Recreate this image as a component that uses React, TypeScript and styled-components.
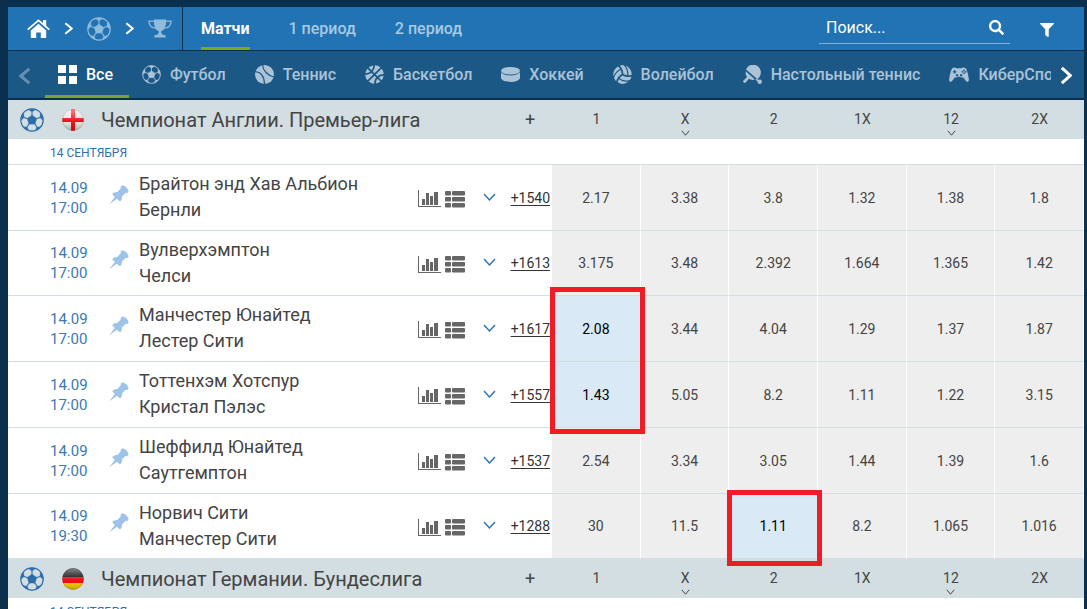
import React from 'react';
import styled, { createGlobalStyle } from 'styled-components';
import { FaSearch, FaFilter, FaBasketballBall, FaVolleyballBall } from 'react-icons/fa';

const GlobalStyle = createGlobalStyle`
  * { box-sizing: border-box; }
  body {
    margin: 0;
    background: #0b304e;
    font-family: Roboto, "Liberation Sans", sans-serif;
    color: #444;
    overflow: hidden;
  }
  button, input { font: inherit; }
  svg { display: block; flex: none; }
`;

const Page = styled.div`
  padding: 7px 3px 0 8px;
  height: 100vh;
  overflow: hidden;
`;

const TopBar = styled.header`
  display: flex;
  height: 43px;
  background: #2273b3;
  color: #fff;
`;

const Crumbs = styled.nav`
  display: flex;
  align-items: center;
  gap: 14px;
  width: 175px;
  padding-left: 19px;
  border-right: 1px solid #0b304e;
`;

const CrumbLink = styled.a<{ $dim?: boolean }>`
  display: block;
  color: ${p => (p.$dim ? '#91bbdb' : '#fff')};
`;

const Periods = styled.div`
  display: flex;
  gap: 39px;
  margin-left: 18px;
`;

const PeriodButton = styled.button<{ $active?: boolean }>`
  padding: 3px 0 0;
  border: 0;
  border-bottom: 3px solid ${p => (p.$active ? '#78ab1c' : 'transparent')};
  background: none;
  font-size: 16px;
  font-weight: ${p => (p.$active ? 700 : 500)};
  color: ${p => (p.$active ? '#fff' : '#a7c9e4')};
`;

const Search = styled.label`
  display: flex;
  align-items: center;
  width: 191px;
  height: 37px;
  margin-left: auto;
  padding: 5px 6px 0 7px;
  border-bottom: 1px solid #7fb0d6;
`;

const SearchInput = styled.input`
  flex: 1;
  min-width: 0;
  padding: 0;
  border: 0;
  outline: 0;
  background: none;
  font-size: 16px;
  color: #fff;
  &::placeholder { color: #fff; opacity: 1; }
`;

const IconButton = styled.button<{ $dim?: boolean }>`
  display: flex;
  align-items: center;
  justify-content: center;
  flex: none;
  padding: 0;
  border: 0;
  background: none;
  color: ${p => (p.$dim ? '#6790b0' : '#fff')};
`;

const FilterButton = styled(IconButton)`
  width: 74px;
  padding-top: 2px;
`;

const SportsBar = styled.nav`
  display: flex;
  height: 47px;
  margin: 1px 0 2px;
  background: #1c5885;
`;

const ScrollButton = styled(IconButton)`
  width: ${p => (p.$dim ? 37 : 33)}px;
  padding: 2px 3px 0 0;
`;

const SportsList = styled.div`
  display: flex;
  flex: 1;
  min-width: 0;
  overflow: hidden;
`;

const SportTab = styled.button<{ $active?: boolean }>`
  display: flex;
  align-items: center;
  gap: 9px;
  flex: none;
  padding: 3px 16px 0 13px;
  border: 0;
  border-bottom: 3px solid ${p => (p.$active ? '#78a530' : 'transparent')};
  background: none;
  font-size: 16px;
  font-weight: 500;
  white-space: nowrap;
  color: ${p => (p.$active ? '#fff' : '#abc3d7')};
`;

const LeagueTable = styled.table`
  width: 100%;
  table-layout: fixed;
  border-collapse: separate;
  border-spacing: 0;
  background: #fff;
  th, td { padding: 0; }
`;

const Column = styled.col<{ $w?: number }>`
  width: ${p => (p.$w ? `${p.$w}px` : 'auto')};
`;

const HeadRow = styled.tr`
  height: 39px;
  background: #d3dee2;
`;

const HeadCell = styled.th`
  font-size: 14px;
  font-weight: 400;
  text-align: center;
`;

const PlusCell = styled(HeadCell)`
  && { padding-right: 2px; }
  font-size: 18px;
`;

const LeagueName = styled.div`
  display: flex;
  align-items: center;
  padding-left: 12px;
  font-size: 20px;
  text-align: left;
  color: #444;
  white-space: nowrap;
`;

const LeagueSport = styled.span`
  color: #2b6dab;
`;

const FlagSlot = styled.span`
  margin: 0 17px 0 18px;
`;

const MarketButton = styled.button`
  display: flex;
  flex-direction: column;
  align-items: center;
  gap: 2px;
  width: 100%;
  height: 39px;
  padding: 11px 0 0;
  border: 0;
  background: none;
  line-height: 17px;
  color: #444;
`;

const DateCell = styled.td`
  && { height: 26px; padding: 3px 0 0 42px; }
  border-bottom: 1px solid #d3dee2;
  font-size: 12px;
  color: #2e70ab;
`;

const MatchRow = styled.tr`
  height: 66px;
  &:nth-child(4n + 3) { height: 65px; }
  td { border-bottom: 1px solid #d3dee2; }
`;

const TimeCell = styled.td`
  && { padding-left: 42px; }
  font-size: 15px;
  line-height: 20px;
  color: #3a79b1;
`;

const PinCell = styled.td`
  && { padding: 0 0 6px 9px; }
`;

const PinButton = styled(IconButton)`
  color: #9ec3e8;
`;

const TeamsCell = styled.td`
  && { padding-bottom: 1px; }
  font-size: 18px;
  line-height: 26px;
  white-space: nowrap;
`;

const Tools = styled.div`
  display: flex;
  align-items: center;
  gap: 4px;
  padding-top: 3px;
`;

const ToolButton = styled(IconButton)`
  color: #666;
`;

const ExpandButton = styled(IconButton)`
  margin: 0 0 5px 14px;
  color: #2e76b5;
`;

const CountCell = styled.td`
  && { padding-right: 2px; }
  text-align: right;
  font-size: 14px;
`;

const CountLink = styled.a`
  color: #333;
  text-underline-offset: 2px;
`;

const OddCell = styled.td<{ $hot?: boolean }>`
  position: relative;
  border-right: 1px solid #fff;
  background: ${p => (p.$hot ? '#d9e9f5' : '#eee')};
`;

const OddButton = styled.button<{ $hot?: boolean }>`
  width: 100%;
  height: 64px;
  padding: 0;
  border: 0;
  background: none;
  font-size: 14px;
  color: ${p => (p.$hot ? '#000' : '#444')};
`;

const Marker = styled.span<{ $rows: number }>`
  position: absolute;
  z-index: 2;
  top: ${p => (p.$rows > 1 ? -9 : -4)}px;
  left: -2px;
  right: -5px;
  height: ${p => (p.$rows > 1 ? 147 : 76)}px;
  border: 5px solid #ee1c25;
  pointer-events: none;
`;

const Football = ({ size }: { size: number }) => (
  <svg width={size} height={size} viewBox="0 0 24 24" fill="none" stroke="currentColor">
    <circle cx="12" cy="12" r="11.2" strokeWidth="1.2" />
    <path d="M12 7.2l4.700 3.400-1.800 5.400H9.100l-1.800-5.400z" fill="currentColor" strokeWidth=".6" />
    <path d="M12 8V3.8M16 10.8l4-1.4M14.6 15.600l2.600 3.600M9.400 15.600l-2.600 3.600M8 10.800L4 9.400" strokeWidth="1.1" />
    <path d="M8.200 1.600L12 4l3.800-2.400q-3.800-1.400-7.600 0zM20.400 5.200l-.6 4.300 3.200 2.800q.2-4-2.600-7.100zM3.600 5.200l.6 4.300L1 12.300q-.2-4 2.600-7.100zM16.700 19.300l4.100-.8q-2 3-5.600 4.200zM7.300 19.300l-4.100-.8q2 3 5.600 4.200z" fill="currentColor" strokeWidth=".3" />
  </svg>
);

const Home = () => (
  <svg width="23" height="20" viewBox="0 0 23 20" fill="currentColor">
    <path d="M11.500 4.800l7.700 6.800V18.300q0 .7-.7.700h-4.700v-5.500H9.200V19H4.500q-.7 0-.7-.7v-6.700z" />
    <path d="M.7 10.600L11.500 1.400l10.800 9.200" fill="none" stroke="currentColor" strokeWidth="1.800" />
    <path d="M16 1h3.200v7.500L16 5.800z" />
  </svg>
);

const Trophy = () => (
  <svg width="24" height="19" viewBox="0 0 24 19" fill="currentColor">
    <path d="M6 .5h12v3.300c0 4.300-2 7.200-4.300 8.300-.6.400-.5 1.600-.1 2.300.5.900 1.300 1.500 3.400 1.700.5 0 .6.300.6.600V18.500H6.400v-1.800c0-.3.1-.6.6-.6 2.100-.2 2.900-.8 3.400-1.700.4-.7.500-1.900-.1-2.300C8 11 6 8.100 6 3.800z" />
    <path d="M6 2.200H.9c.1 4.200 2.800 6.800 7.500 7.100M18 2.200h5.100c-.1 4.200-2.800 6.800-7.500 7.100" fill="none" stroke="currentColor" strokeWidth="1.300" />
  </svg>
);

const Chevron = ({ w, h, stroke, dir }: { w: number; h: number; stroke: number; dir: 'left' | 'right' | 'down' }) => {
  const s = stroke / 2 + 0.3;
  const d = {
    right: `M${s} ${s}L${w - s} ${h / 2}L${s} ${h - s}`,
    left: `M${w - s} ${s}L${s} ${h / 2}L${w - s} ${h - s}`,
    down: `M${s} ${s}L${w / 2} ${h - s}L${w - s} ${s}`,
  }[dir];
  return (
    <svg width={w} height={h} viewBox={`0 0 ${w} ${h}`} fill="none" stroke="currentColor" strokeWidth={stroke}>
      <path d={d} />
    </svg>
  );
};

const AllSports = () => (
  <svg width="19" height="19" viewBox="0 0 19 19" fill="currentColor">
    <path d="M0 0h8v8H0zM11 0h8v8h-8zM0 11h8v8H0zM11 11h8v8h-8z" />
  </svg>
);

const Tennis = () => (
  <svg width="19" height="19" viewBox="0 0 19 19" fill="none" stroke="#1c5885" strokeWidth="1.200">
    <circle cx="9.500" cy="9.500" r="9.500" fill="currentColor" stroke="none" />
    <path d="M7.500 0c.5 5.500 5 10.500 11.500 12M0 6.500c6 .5 9.300 5.500 9.500 12.500" />
  </svg>
);

const Puck = () => (
  <svg width="19" height="15" viewBox="0 0 19 15" fill="currentColor">
    <ellipse cx="9.500" cy="3.800" rx="9.500" ry="3.800" />
    <path d="M0 5.300c1.500 2 5 3.200 9.500 3.200S17.500 7.300 19 5.300v6C18 13.700 14 15 9.500 15S1 13.700 0 11.300z" />
  </svg>
);

const TableTennis = () => (
  <svg width="19" height="19" viewBox="0 0 19 19" fill="currentColor">
    <path d="M3.800 3A7.300 7.300 0 0 1 16.500 11.800q-.8 1.500-2 2.400L3 4.400z" />
    <path d="M2.800 6.200L12 14.600q-3.500 1-6-.8l-3.300 3.800q-1 .8-2-.1t-.2-2l3.500-3.400q-2-2.600-1.200-5.900z" />
    <path d="M13 14.200l2.500 2" stroke="currentColor" strokeWidth="1.500" />
    <circle cx="16.700" cy="16.700" r="2.200" />
  </svg>
);

const Gamepad = () => (
  <svg width="20" height="15" viewBox="0 0 20 15" fill="currentColor">
    <path fillRule="evenodd" d="M4.200.8Q6 .2 7.300 1.200h5.400Q14 .2 15.800.8q1.500.5 2.200 3 1.500 4.600 1.900 8.700c.1 2.600-2 3-3.200 1.300l-2.600-3.600q-1.700.8-3-.5H8.900q-1.300 1.300-3 .5l-2.600 3.600C2.100 15.500 0 15.100.1 12.500Q.5 8.400 2 3.800 2.700 1.300 4.200.8zM5 3v1.200H3.800v1.200H5v1.200h1.200V5.400h1.200V4.200H6.200V3zM8 7a1.200 1.200 0 1 0 .1 0zm4 0a1.200 1.200 0 1 0 .1 0zM15 2.500a.8.8 0 1 0 .1 0zm0 3a.8.8 0 1 0 .1 0zm-1.600-1.500a.8.8 0 1 0 .1 0zm3.200 0a.8.8 0 1 0 .1 0z" />
  </svg>
);

const Pin = () => (
  <svg width="20" height="20" viewBox="0 0 20 20" fill="currentColor">
    <path d="M0 19.600L5.800 12 3.400 9.600Q3.800 6.900 8.300 7L11.800 3.300Q11.300 1.500 12.500.7 15 0 17.300 2.200 20 5 19.400 7 18.600 8.500 16.700 7.800L12.900 11.500Q13.300 15.500 10.700 16.300L7.900 13.700z" />
  </svg>
);

const Stats = () => (
  <svg width="23" height="18" viewBox="0 0 23 18" fill="currentColor">
    <path d="M0 0h1v16h22v1H0zM4 9h3v6H4zM8 3h3v12H8zM12 6h3v9h-3zM16 2h4v13h-4z" />
  </svg>
);

const ListIcon = () => (
  <svg width="20" height="17" viewBox="0 0 20 17" fill="currentColor">
    {[0, 6, 12].map(y => (
      <g key={y}>
        <rect x="0" y={y} width="6" height="4.500" rx="1" />
        <rect x="7" y={y} width="13" height="4.500" rx="1" />
      </g>
    ))}
  </svg>
);

const Flag = ({ country }: { country: 'en' | 'de' }) => (
  <svg width="22" height="22" viewBox="0 0 22 22">
    <defs>
      <clipPath id={`disc-${country}`}><circle cx="11" cy="11" r="10.700" /></clipPath>
      <linearGradient id={`gloss-${country}`} x1="0" y1="0" x2="0" y2="1">
        <stop offset="0" stopColor="#fff" stopOpacity=".5" />
        <stop offset=".45" stopColor="#fff" stopOpacity=".1" />
        <stop offset=".6" stopColor="#000" stopOpacity="0" />
        <stop offset="1" stopColor="#000" stopOpacity=".25" />
      </linearGradient>
    </defs>
    <g clipPath={`url(#disc-${country})`}>
      {country === 'en' ? (
        <>
          <path d="M0 0h22v22H0z" fill="#e6e6e6" />
          <path d="M9 0h4v9h9v4h-9v9H9v-9H0V9h9z" fill="#f8101c" />
        </>
      ) : (
        <>
          <path d="M0 0h22v9H0z" fill="#111" />
          <path d="M0 9h22v6H0z" fill="#f01010" />
          <path d="M0 15h22v7H0z" fill="#ffd400" />
        </>
      )}
      <path d="M0 0h22v22H0z" fill={`url(#gloss-${country})`} />
    </g>
    <circle cx="11" cy="11" r="10.500" fill="none" stroke="#000" strokeOpacity=".2" strokeWidth=".7" />
  </svg>
);

const sports: [string, React.ReactNode][] = [
  ['Все', <AllSports />],
  ['Футбол', <Football size={19} />],
  ['Теннис', <Tennis />],
  ['Баскетбол', <FaBasketballBall size={19} />],
  ['Хоккей', <Puck />],
  ['Волейбол', <FaVolleyballBall size={19} />],
  ['Настольный теннис', <TableTennis />],
  ['КиберСпорт', <Gamepad />],
];

interface Match {
  time: string;
  home: string;
  away: string;
  count: string;
  odds: string[];
  hot?: number;
  marker?: number;
}

const englishMatches: Match[] = [
  { time: '17:00', home: 'Брайтон энд Хав Альбион', away: 'Бернли', count: '+1540', odds: ['2.17', '3.38', '3.8', '1.32', '1.38', '1.8'] },
  { time: '17:00', home: 'Вулверхэмптон', away: 'Челси', count: '+1613', odds: ['3.175', '3.48', '2.392', '1.664', '1.365', '1.42'] },
  { time: '17:00', home: 'Манчестер Юнайтед', away: 'Лестер Сити', count: '+1617', odds: ['2.08', '3.44', '4.04', '1.29', '1.37', '1.87'], hot: 0, marker: 2 },
  { time: '17:00', home: 'Тоттенхэм Хотспур', away: 'Кристал Пэлэс', count: '+1557', odds: ['1.43', '5.05', '8.2', '1.11', '1.22', '3.15'], hot: 0 },
  { time: '17:00', home: 'Шеффилд Юнайтед', away: 'Саутгемптон', count: '+1537', odds: ['2.54', '3.34', '3.05', '1.44', '1.39', '1.6'] },
  { time: '19:30', home: 'Норвич Сити', away: 'Манчестер Сити', count: '+1288', odds: ['30', '11.5', '1.11', '8.2', '1.065', '1.016'], hot: 2, marker: 1 },
];

const markets = ['1', 'X', '2', '1X', '12', '2X'];
const leftColumns = [92, 39, 279, 92, 42];

const League = ({ name, country, matches }: { name: string; country: 'en' | 'de'; matches: Match[] }) => (
  <LeagueTable>
    <colgroup>
      {leftColumns.map((w, i) => <Column key={i} $w={w} />)}
      {markets.map(m => <Column key={m} />)}
    </colgroup>
    <thead>
      <HeadRow>
        <HeadCell colSpan={4}>
          <LeagueName>
            <LeagueSport><Football size={24} /></LeagueSport>
            <FlagSlot><Flag country={country} /></FlagSlot>
            {name}
          </LeagueName>
        </HeadCell>
        <PlusCell>+</PlusCell>
        {markets.map(m => (
          <HeadCell key={m}>
            <MarketButton>
              {m}
              {(m === 'X' || m === '12') && <Chevron w={9} h={6} stroke={1} dir="down" />}
            </MarketButton>
          </HeadCell>
        ))}
      </HeadRow>
    </thead>
    <tbody>
      <tr><DateCell colSpan={11}>14 СЕНТЯБРЯ</DateCell></tr>
      {matches.map(match => (
        <MatchRow key={match.home}>
          <TimeCell>14.09<br />{match.time}</TimeCell>
          <PinCell><PinButton aria-label="Закрепить"><Pin /></PinButton></PinCell>
          <TeamsCell>{match.home}<br />{match.away}</TeamsCell>
          <td>
            <Tools>
              <ToolButton aria-label="Статистика"><Stats /></ToolButton>
              <ToolButton aria-label="Список"><ListIcon /></ToolButton>
              <ExpandButton aria-label="Развернуть"><Chevron w={13} h={8} stroke={1.5} dir="down" /></ExpandButton>
            </Tools>
          </td>
          <CountCell><CountLink href="#">{match.count}</CountLink></CountCell>
          {match.odds.map((odd, i) => (
            <OddCell key={i} $hot={match.hot === i}>
              <OddButton $hot={match.hot === i}>{odd}</OddButton>
              {match.hot === i && match.marker && <Marker $rows={match.marker} />}
            </OddCell>
          ))}
        </MatchRow>
      ))}
    </tbody>
  </LeagueTable>
);

export default function App() {
  return (
    <Page>
      <GlobalStyle />
      <TopBar>
        <Crumbs>
          <CrumbLink href="#" aria-label="Главная"><Home /></CrumbLink>
          <Chevron w={9} h={13} stroke={2} dir="right" />
          <CrumbLink href="#" aria-label="Футбол" $dim><Football size={24} /></CrumbLink>
          <Chevron w={9} h={13} stroke={2} dir="right" />
          <CrumbLink href="#" aria-label="Турниры" $dim><Trophy /></CrumbLink>
        </Crumbs>
        <Periods>
          <PeriodButton $active>Матчи</PeriodButton>
          <PeriodButton>1 период</PeriodButton>
          <PeriodButton>2 период</PeriodButton>
        </Periods>
        <Search>
          <SearchInput type="text" placeholder="Поиск..." aria-label="Поиск" />
          <FaSearch size={15} />
        </Search>
        <FilterButton aria-label="Фильтр"><FaFilter size={14} /></FilterButton>
      </TopBar>
      <SportsBar>
        <ScrollButton $dim aria-label="Назад"><Chevron w={12} h={18} stroke={3} dir="left" /></ScrollButton>
        <SportsList>
          {sports.map(([label, icon], i) => (
            <SportTab key={label} $active={i === 0}>{icon}{label}</SportTab>
          ))}
        </SportsList>
        <ScrollButton aria-label="Вперёд"><Chevron w={12} h={19} stroke={3} dir="right" /></ScrollButton>
      </SportsBar>
      <main>
        <League name="Чемпионат Англии. Премьер-лига" country="en" matches={englishMatches} />
        <League name="Чемпионат Германии. Бундеслига" country="de" matches={[]} />
      </main>
    </Page>
  );
}
